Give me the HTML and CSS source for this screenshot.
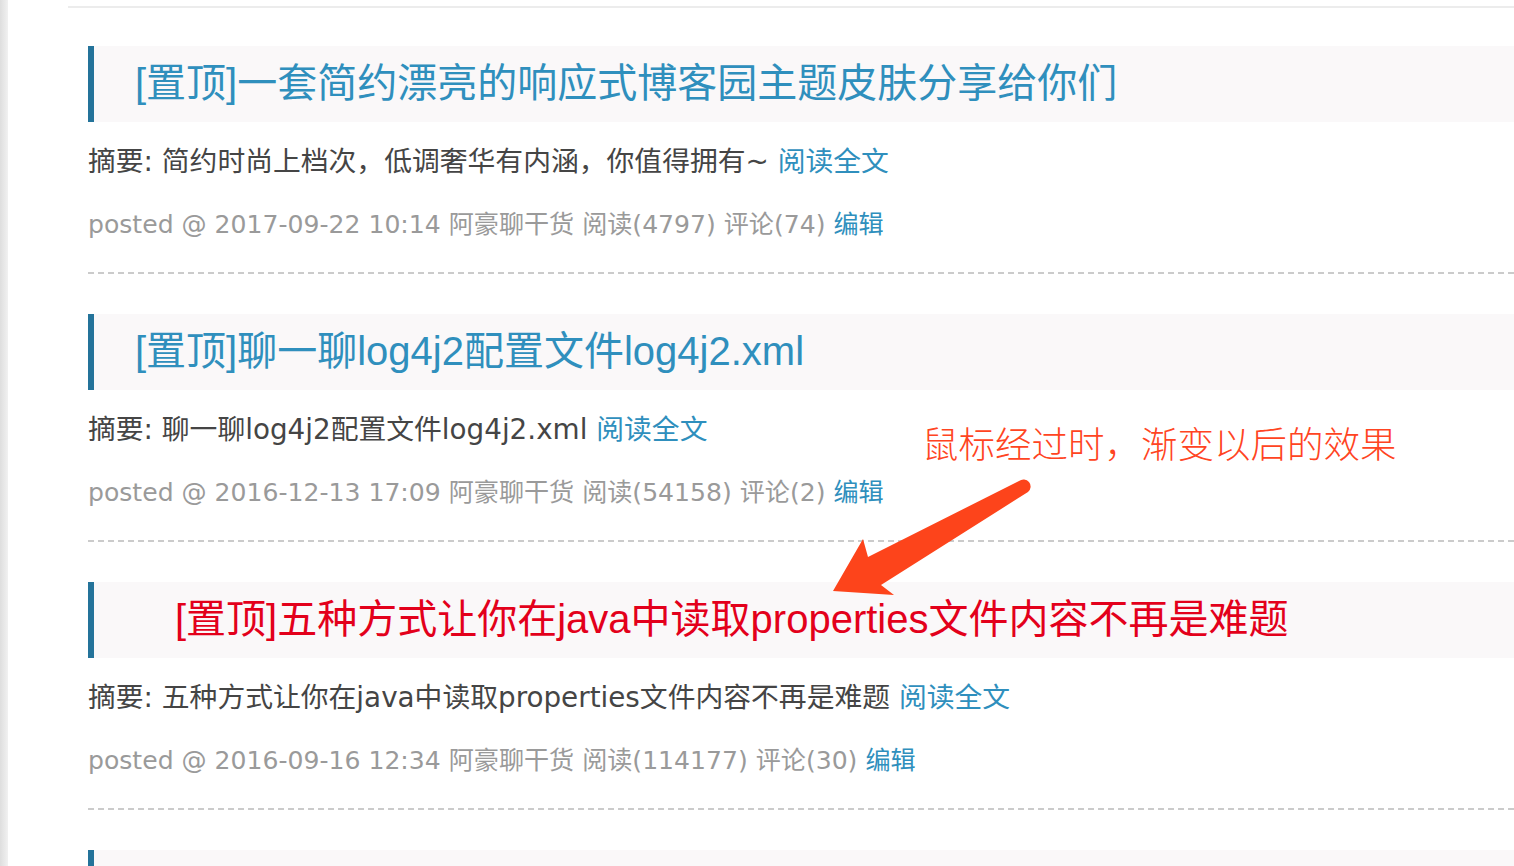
FILE: index.html
```html
<!DOCTYPE html>
<html lang="zh-CN">
<head>
<meta charset="utf-8">
<title>博客园</title>
<link rel="stylesheet" href="styles.css">
</head>
<body>
<div class="page">
  <div class="gutter"></div>
  <div class="main">
    <div class="topline"></div>
    <div class="posts">
      <div class="post">
        <div class="post-title"><a class="title-link" href="#">[置顶]一套简约漂亮的响应式博客园主题皮肤分享给你们</a></div>
        <div class="post-summary">摘要: 简约时尚上档次，低调奢华有内涵，你值得拥有~ <a class="link" href="#">阅读全文</a></div>
        <div class="post-meta">posted @ 2017-09-22 10:14 阿豪聊干货 阅读(4797) 评论(74) <a class="link" href="#">编辑</a></div>
        <div class="dashed"></div>
      </div>
      <div class="post">
        <div class="post-title"><a class="title-link" href="#">[置顶]聊一聊log4j2配置文件log4j2.xml</a></div>
        <div class="post-summary">摘要: 聊一聊log4j2配置文件log4j2.xml <a class="link" href="#">阅读全文</a></div>
        <div class="post-meta">posted @ 2016-12-13 17:09 阿豪聊干货 阅读(54158) 评论(2) <a class="link" href="#">编辑</a></div>
        <div class="dashed"></div>
      </div>
      <div class="post">
        <div class="post-title is-hover"><a class="title-link" href="#">[置顶]五种方式让你在java中读取properties文件内容不再是难题</a></div>
        <div class="post-summary">摘要: 五种方式让你在java中读取properties文件内容不再是难题 <a class="link" href="#">阅读全文</a></div>
        <div class="post-meta">posted @ 2016-09-16 12:34 阿豪聊干货 阅读(114177) 评论(30) <a class="link" href="#">编辑</a></div>
        <div class="dashed"></div>
      </div>
      <div class="post">
        <div class="post-title"></div>
      </div>
    </div>
  </div>
</div>
<div class="note">鼠标经过时，渐变以后的效果</div>
<svg class="arrow" width="1514" height="866" viewBox="0 0 1514 866" xmlns="http://www.w3.org/2000/svg">
  <path d="M1019 481 L868 557 L863 539 L833 591 L894 595 L881 585 L1028 492 A6 6 0 0 0 1019 481 Z" fill="#fd441b"/>
</svg>
</body>
</html>
```
FILE: styles.css
```css
html, body {
  margin: 0;
  padding: 0;
  background: #ffffff;
  overflow: hidden;
}

body {
  width: 1514px;
  height: 866px;
  position: relative;
}

.page {
  display: flex;
  height: 866px;
}

.gutter {
  width: 8px;
  flex: 0 0 8px;
  background: linear-gradient(to right, #dedede, #f1f1f1);
}

.main {
  flex: 1;
  min-width: 0;
}

.topline {
  margin-top: 6px;
  margin-left: 60px;
  height: 2px;
  background: #ececec;
}

.posts {
  padding-top: 38px;
  margin-left: 80px;
}

.post-title {
  height: 76px;
  border-left: 6px solid #24739a;
  background: #faf8f9;
  padding-left: 41px;
  font-family: "Liberation Sans", "Noto Sans CJK SC", sans-serif;
  font-size: 40px;
  line-height: 74px;
  white-space: nowrap;
}

.title-link {
  color: #2f8fbd;
  text-decoration: none;
}

.post-title.is-hover {
  padding-left: 81px;
}

.post-title.is-hover .title-link {
  color: #e3001b;
}

.post-summary {
  margin-top: 20px;
  font-family: "DejaVu Sans", "Noto Sans CJK SC", sans-serif;
  font-size: 27.8px;
  line-height: 40px;
  color: #454545;
  white-space: nowrap;
}

.post-meta {
  margin-top: 23px;
  font-family: "DejaVu Sans", "Noto Sans CJK SC", sans-serif;
  font-size: 25.1px;
  line-height: 40px;
  color: #9a9a9a;
  white-space: nowrap;
}

.link {
  color: #2f8fbd;
  text-decoration: none;
}

.dashed {
  margin-top: 27px;
  margin-bottom: 40px;
  height: 2px;
  background-image: linear-gradient(to right, #cbcbcb 6px, transparent 6px);
  background-size: 10px 2px;
  background-repeat: repeat-x;
}

.note {
  position: absolute;
  left: 922px;
  top: 423px;
  font-family: "Noto Sans CJK SC", sans-serif;
  font-weight: 300;
  font-size: 36.5px;
  line-height: 40px;
  color: #ff4422;
  white-space: nowrap;
}

.arrow {
  position: absolute;
  left: 0;
  top: 0;
  pointer-events: none;
}
```
